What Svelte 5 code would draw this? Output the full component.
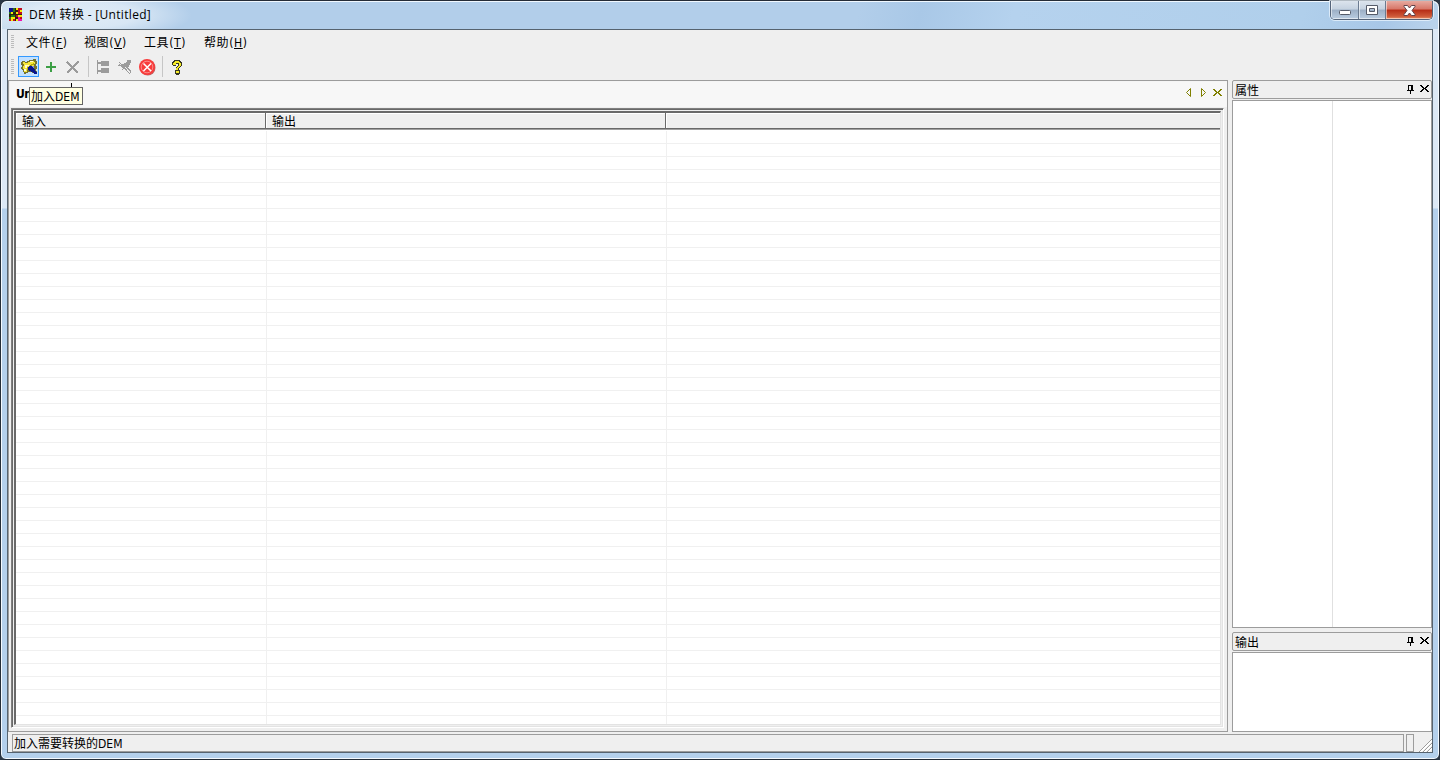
<script lang="ts">
  const menus = [
    { label: '文件', key: 'F', width: 58 },
    { label: '视图', key: 'V', width: 60 },
    { label: '工具', key: 'T', width: 60 },
    { label: '帮助', key: 'H', width: 60 }
  ];

  const rows = Array.from({ length: 46 }, (_, i) => i);

  // Application icon, one letter per coloured tile
  const tiles = ['nngyrr', 'nngkry', 'gykyrr', 'kggryy', 'gyykmr', 'ryrymm'];
  const tileColors: Record<string, string> = {
    n: '#10108c',
    r: '#c00c20',
    y: '#f8e808',
    k: '#302010',
    g: '#287818',
    m: '#f010b0'
  };
</script>

{#snippet closeIcon()}
  <svg class="pane-close" width="9" height="9" viewBox="0 0 9 9">
    <path d="M0 1h2v1h1v1h1v1h1V3h1V2h1V1h2v1H8v1H7v1H6v1h1v1h1v1h1v1H7V7H6V6H5V5H4v1H3v1H2v1H0V7h1V6h1V5h1V4H2V3H1V2H0z" />
  </svg>
{/snippet}

{#snippet paneTitle(title: string)}
  <header class="pane-title">
    <span>{title}</span>
    <svg class="pin" width="7" height="9" viewBox="0 0 7 9">
      <path d="M1 0h5v5h1v1H4v3H3V6H0V5h1zM2 1v4h2V1z" fill-rule="evenodd" />
    </svg>
    {@render closeIcon()}
  </header>
{/snippet}

<div class="window">
  <header class="titlebar">
    <svg class="app-icon" width="13" height="13" viewBox="0 0 13 13">
      <rect width="13" height="13" fill="#302010" />
      {#each tiles as line, y}
        {#each line.split('') as tile, x}
          <rect x={x * 2 + (x > 2 ? 1 : 0)} y={y * 2 + (y > 2 ? 1 : 0)} width="2" height="2" fill={tileColors[tile]} />
        {/each}
      {/each}
    </svg>
    <h1>DEM 转换 - [Untitled]</h1>
    <div class="caption-buttons">
      <button class="caption minimize" aria-label="Minimize">
        <svg width="14" height="14" viewBox="0 0 14 14">
          <rect x="1.5" y="6.5" width="11" height="4" rx="1" fill="#fff" stroke="#555b69" />
        </svg>
      </button>
      <button class="caption restore" aria-label="Restore">
        <svg width="12" height="10" viewBox="0 0 12 10">
          <path d="M.5.5h11v9H.5zM3.500 3.500v3h5v-3z" fill="#fff" fill-rule="evenodd" stroke="#555b69" />
        </svg>
      </button>
      <button class="caption close" aria-label="Close">
        <svg width="13" height="11" viewBox="0 0 13 11">
          <path d="M1 .5h3.500l2 2.500 2-2.500H12v1L9 5.500l3 4v1H8.500l-2-2.500-2 2.500H1v-1l3-4-3-4z" fill="#fff" stroke="#63434a" />
        </svg>
      </button>
    </div>
  </header>

  <div class="client">
    <nav class="menubar">
      <i class="grip"></i>
      {#each menus as menu}
        <span style="width: {menu.width}px">{menu.label}(<u>{menu.key}</u>)</span>
      {/each}
    </nav>

    <div class="toolbar">
      <i class="grip"></i>
      <button class="tool active" aria-label="加入DEM">
        <svg width="18" height="17" viewBox="0 0 18 17">
          <path d="M2 3h3v1h2V3h2V2h4V1h3v2h1v3h-1v2h1v3h-1v2h1v3h-3v-1h-2v-1H9v1H6v1H3v-3H2v-2H1V9h1V7H1V4h1z" fill="#77742c" />
          <path d="M3 4h2v1h3V4h2V3h4v1h1v2h-1v2h-2V7h-2v2H8v3H7v2H4v-3H3V8h1V6H3z" fill="#f5e638" />
          <path d="M10 3h3v1h-3zM5 7h4v1H7v2H5zM4 11h2v2H4z" fill="#fffbd0" />
          <path d="M13 5h1v2h-2v1h-1V6h2zM7 9h1v3H7z" fill="#b5ac11" />
          <path d="M9 8h3v1h2v2h1v2h1v1h1v2h-3v-1h-1v-1h-2v-1H9v-1H8V9h1z" fill="#0a168b" />
          <path d="M12 8h2v2h-1V9h-1z" fill="#8090d9" />
          <path d="M1 12h2v2h1v2H1zM8 14h2v2H7v-1h1z" fill="#c2e0ff" />
        </svg>
      </button>
      <button class="tool add" aria-label="添加">
        <svg width="10" height="10" viewBox="0 0 10 10"><path d="M4 0h2v4h4v2H6v4H4V6H0V4h4z" fill="#3c9f45" /></svg>
      </button>
      <button class="tool remove" aria-label="删除">
        <svg width="14" height="13" viewBox="0 0 14 13">
          <path d="M1 1l11 11M12.500.5L1 12" stroke="#9b9b9b" stroke-width="2.200" />
        </svg>
      </button>
      <i class="separator first"></i>
      <button class="tool tree" aria-label="转换设置">
        <svg width="13" height="14" viewBox="0 0 13 14">
          <path d="M0 0h1v2h3V1h8v5H4V4H1v6h3V8h8v5H4v-1H1v2H0z" fill="#9b9b9b" />
        </svg>
      </button>
      <button class="tool run" aria-label="运行">
        <svg width="14" height="15" viewBox="0 0 14 15">
          <path d="M9 1h4v3h-1v2h-1v2h-1v1h1v1h1v1h1v3h-1v-2h-1v-1h-1v-1H9v-1H8v-1H7v1H6v1H5v1H4v-1h1V9H4V8H3V7H0V6h1V5h1v1h2V5h2V4h2V3h1z" fill="#9b9b9b" />
          <path d="M1 3l11 12" stroke="#9b9b9b" fill="none" />
        </svg>
      </button>
      <button class="tool stop" aria-label="停止">
        <svg width="17" height="17" viewBox="0 0 17 17">
          <circle cx="8.800" cy="8.800" r="7.700" fill="#b66" />
          <circle cx="8" cy="8" r="8" fill="#f83c3c" />
          <circle cx="8" cy="8" r="5.800" fill="none" stroke="#fbaaa8" stroke-width=".7" />
          <path d="M4.500 4.500l7.500 7.500m0-7.500L4.500 12" stroke="#fff" stroke-width="1.500" />
        </svg>
      </button>
      <i class="separator second"></i>
      <button class="tool help" aria-label="帮助">
        <svg width="11" height="15" viewBox="0 0 11 15">
          <path d="M2 0h6v1h1v1h1v4H9v1H8v1H7v2h1v4H7v1H4v-1H3v-4h1V7h1V6h1V4H4v2H1V5H0V2h1V1h1z" fill="#373723" />
          <path d="M3 1h4v1h1v1h1v3H8v1H7v1H6v2H4V8h1V7h1V6h1V3H4v2H1V3h1V2h1zM4 11h3v2H4z" fill="#f7ec28" />
        </svg>
      </button>
    </div>

    <div class="workspace">
      <main class="document">
        <div class="tabstrip">
          <span class="tab">Untitled</span>
          <div class="tab-controls">
            <svg width="6" height="9" viewBox="0 0 6 9"><path d="M5.500.5v8l-4-4z" fill="none" stroke="#808000" /></svg>
            <svg width="6" height="9" viewBox="0 0 6 9"><path d="M.5.5v8l4-4z" fill="none" stroke="#808000" /></svg>
            {@render closeIcon()}
          </div>
        </div>
        <div class="child-frame">
          <div class="grid">
            <div class="grid-head">
              <span>输入</span>
              <span>输出</span>
              <span></span>
            </div>
            <div class="grid-body">
              {#each rows as row (row)}
                <div class="grid-row"><i></i><i></i><i></i></div>
              {/each}
            </div>
          </div>
        </div>
      </main>

      <aside class="sidebar">
        {@render paneTitle('属性')}
        <div class="properties"><i></i><i></i></div>
        {@render paneTitle('输出')}
        <div class="output"></div>
      </aside>
    </div>

    <footer class="statusbar">
      <span class="status-text">加入需要转换的DEM</span>
      <span class="status-cell"></span>
      <svg class="resize" width="13" height="13" viewBox="0 0 13 13">
        <path d="M0 13L13 0M4 13l9-9M8 13l5-5" stroke="#9c9c9c" fill="none" />
        <path d="M1.500 13L13 1.500M5.500 13L13 5.500M9.500 13L13 9.500" stroke="#fff" fill="none" />
      </svg>
    </footer>
  </div>

  <i class="cursor-mark"></i>
  <div class="tooltip">加入DEM</div>
</div>

<style>
  :global(body) {
    background: #2b3745;
    overflow: hidden;
  }

  .window,
  .window * {
    box-sizing: border-box;
  }

  .window {
    position: relative;
    width: 1440px;
    height: 760px;
    padding: 0 6px 6px;
    border: 1px solid #242c37;
    border-radius: 7px 7px 6px 6px;
    box-shadow: inset 0 0 0 1px #f4f9fe;
    background: linear-gradient(#dce8f5, #dce8f5 207px, #b4d0ec 208px);
    font: 12px/16px "DejaVu Sans Condensed", "Noto Sans CJK SC", sans-serif;
    color: #000;
  }

  .titlebar {
    display: flex;
    height: 28px;
    margin: 0 -5px;
    padding: 0 5px 0 7px;
    border-top: 1px solid #f0f8ff;
    border-radius: 6px 6px 0 0;
    background:
      radial-gradient(ellipse 110px 26px at 80px 13px, rgba(232, 241, 249, .85), rgba(232, 241, 249, .7) 50%, rgba(232, 241, 249, 0)),
      linear-gradient(105deg, #c5daed 0, #b2ceea 110px, #b2ceea 830px, #a9c8e7 890px, #b5d2ee 980px, #b0cfeb 1260px, #a8c7e7 1340px, #c7dcf0 1430px);
  }

  .app-icon {
    margin-top: 6px;
    shape-rendering: crispEdges;
  }

  h1 {
    margin: 4px 0 0 7px;
    font: 12px/17px "Open Sans", "Noto Sans CJK SC", sans-serif;
    letter-spacing: .32px;
    white-space: nowrap;
  }

  .caption-buttons {
    display: flex;
    height: 19px;
    margin: -1px 0 0 auto;
    border: 1px solid #55647a;
    border-top: 0;
    border-radius: 0 0 5px 5px;
    box-shadow: 0 0 0 1px rgba(240, 248, 255, .7);
    overflow: hidden;
  }

  .caption {
    display: grid;
    place-items: center;
    width: 27px;
    padding: 0;
    border: 0;
    border-right: 1px solid #6b7b90;
    background: linear-gradient(#dce4ed, #c5d2e0 45%, #9cafc6 50%, #bacde1);
    box-shadow: inset 1px -1px rgba(255, 255, 255, .55);
  }

  .minimize {
    width: 28px;
    padding-top: 1px;
  }

  .caption.close {
    width: 46px;
    border: 0;
    background: linear-gradient(#e7aaa0, #d77667 45%, #b62c16 50%, #ce5a39 85%, #e78f66);
  }

  .client {
    height: 724px;
    width: 1426px;
    border: 1px solid #56636f;
    background: #efefef;
  }

  .menubar {
    display: flex;
    height: 25px;
    padding: 5px 0 0 3px;
    letter-spacing: .6px;
  }

  .grip {
    width: 3px;
    height: 14px;
    margin: 0 12px 0 0;
    background: repeating-linear-gradient(#bcbcbc 0 1px, #efefef 1px 2px);
  }

  .toolbar {
    display: flex;
    height: 25px;
    padding-left: 3px;
  }

  .toolbar .grip {
    height: 16px;
    margin: 4px 4px 0 0;
  }

  .tool {
    display: block;
    flex: none;
    padding: 0;
    border: 0;
    background: none;
  }

  .tool svg {
    display: block;
  }

  .tool:not(.stop) svg {
    shape-rendering: crispEdges;
  }

  .active {
    width: 21px;
    height: 21px;
    margin-top: 1px;
    padding-left: 1px;
    border: 1px solid #3399ff;
    background: #c2e0ff;
  }

  .add {
    margin: 7px 0 0 7px;
    height: 10px;
  }

  .remove {
    margin: 6px 0 0 10px;
    height: 13px;
  }

  .separator {
    width: 1px;
    height: 21px;
    margin-top: 1px;
    background: #c6c6c6;
  }

  .first {
    margin-left: 8px;
  }

  .tree {
    margin: 5px 0 0 8px;
  }

  .run {
    margin: 4px 0 0 8px;
  }

  .stop {
    margin: 4px 0 0 7px;
  }

  .second {
    margin-left: 6px;
  }

  .help {
    margin: 5px 0 0 9px;
  }

  .tool:not(.active) {
    align-self: flex-start;
  }

  .workspace {
    display: flex;
    gap: 4px;
    height: 652px;
  }

  .document {
    width: 1220px;
    border: 1px solid #9c9c9c;
    background: #efefef;
  }

  .tabstrip {
    display: flex;
    justify-content: space-between;
    height: 26px;
    margin-left: 1px;
    padding: 4px 5px 0 6px;
    border-top: 1px solid #f5f5f5;
    background: #f7f7f7;
  }

  .tab {
    font-weight: bold;
    letter-spacing: -.5px;
  }

  .tab-controls {
    display: flex;
    gap: 10px;
    padding-top: 2px;
    fill: #808000;
  }

  .tab-controls svg {
    display: block;
  }

  .tab-controls .pane-close {
    margin-left: -4px;
  }

  .pane-close,
  .pin,
  .resize {
    flex: none;
    shape-rendering: crispEdges;
  }

  .child-frame {
    height: 620px;
    margin: 1px 3px 0 2px;
    padding: 1px;
    border: 1px solid #fff;
    border-color: #808080 #fff #fff #808080;
    box-shadow: inset 1px 1px #696969, inset -1px -1px #e3e3e3;
  }

  .grid {
    height: 614px;
    margin: 1px;
    border: 2px solid;
    border-width: 2px 1px 1px 2px;
    border-color: #696969 #e3e3e3 #e3e3e3 #696969;
    background: #fff;
  }

  .grid-head {
    display: grid;
    grid-template-columns: 250px 400px 1fr;
    height: 16px;
    border-bottom: 1px solid #696969;
    box-shadow: 0 1px #a0a0a0;
    background: #efefef;
  }

  .grid-head span {
    padding-left: 6px;
    border-right: 1px solid #696969;
    box-shadow: inset 1px 1px #fff;
    height: 15px;
    line-height: 18px;
  }

  .grid-head span:last-child {
    border: 0;
  }

  .grid-body {
    height: 595px;
    padding-top: 2px;
    overflow: hidden;
  }

  .grid-row {
    display: grid;
    grid-template-columns: 251px 400px 1fr;
    height: 13px;
    border-bottom: 1px solid #f0f0f0;
  }

  .grid-row i {
    height: 13px;
    border-right: 1px solid #f0f0f0;
  }

  .grid-row i:last-child {
    border: 0;
  }

  .sidebar {
    width: 200px;
  }

  .pane-title {
    display: flex;
    height: 19px;
    padding: 2px 2px 0;
    border: 1px solid #9c9c9c;
    border-radius: 2px;
  }

  .pane-title span {
    flex: 1;
  }

  .pane-title .pin {
    margin: 2px 6px 0 0;
  }

  .pane-title .pane-close {
    margin-top: 1px;
  }

  .properties {
    display: grid;
    grid-template-columns: 100px 1fr;
    height: 528px;
    margin: 1px 0 4px;
    border: 1px solid #9c9c9c;
    background: #fff;
  }

  .properties i:first-child {
    border-right: 1px solid #e0e0e0;
  }

  .output {
    height: 80px;
    margin-top: 1px;
    border: 1px solid #9c9c9c;
    background: #fff;
  }

  .statusbar {
    display: flex;
    height: 20px;
    padding: 2px 0 0 4px;
  }

  .status-text,
  .status-cell {
    width: 1392px;
    height: 18px;
    border: 1px solid #9c9c9c;
    padding-left: 1px;
    line-height: 19px;
  }

  .status-cell {
    width: 8px;
    margin-left: 2px;
    padding: 0;
  }

  .resize {
    margin: 5px 0 0 auto;
  }

  .tooltip {
    position: absolute;
    top: 86px;
    left: 28px;
    width: 54px;
    height: 18px;
    padding-left: 1px;
    border: 1px solid #646464;
    background: #ffffe1;
    line-height: 18px;
    white-space: nowrap;
  }

  .cursor-mark {
    position: absolute;
    top: 82px;
    left: 70px;
    width: 1px;
    height: 4px;
    background: #000;
  }
</style>
